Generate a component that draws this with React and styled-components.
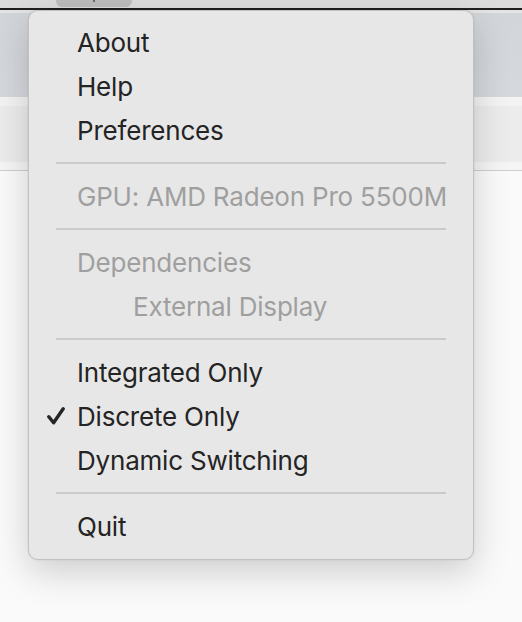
import React from "react";
import styled, { createGlobalStyle } from "styled-components";

const items = [
  { label: "About" },
  { label: "Help" },
  { label: "Preferences" },
  { separator: true },
  { label: "GPU: AMD Radeon Pro 5500M", disabled: true },
  { separator: true },
  { label: "Dependencies", disabled: true },
  { label: "External Display", disabled: true, indent: true },
  { separator: true },
  { label: "Integrated Only" },
  { label: "Discrete Only", checked: true },
  { label: "Dynamic Switching" },
  { separator: true },
  { label: "Quit" }
];

const App = () => (
  <Screen>
    <GlobalStyle />
    <MenuBar>
      <StatusPill>
        <PillGlyph />
      </StatusPill>
    </MenuBar>
    <BarEdge />
    <TitleGap />
    <Toolbar />
    <Band tone="#f3f3f4" size={9} />
    <Band tone="#ececed" size={56} />
    <Band tone="#f5f5f5" size={8} />
    <Rule />
    <Content />

    <Menu>
      {items.map((item, i) =>
        item.separator ? (
          <Separator key={i}>
            <Line />
          </Separator>
        ) : (
          <Item key={i} disabled={item.disabled} indent={item.indent}>
            {item.checked && (
              <Check viewBox="0 0 18 18">
                <path d="M1.8 9.8 L6.6 15.8 L16.2 1.8" />
              </Check>
            )}
            {item.label}
          </Item>
        )
      )}
    </Menu>
  </Screen>
);

const GlobalStyle = createGlobalStyle`
  html, body {
    margin: 0;
    padding: 0;
    background: #ffffff;
  }
`;

const Screen = styled.div`
  position: relative;
  width: 522px;
  height: 622px;
  overflow: hidden;
  display: flex;
  flex-direction: column;
  background: #fbfbfb;
  font-family: Inter, "Noto Sans", sans-serif;
`;

const MenuBar = styled.div`
  height: 8px;
  background: #dcdcdc;
  display: flex;
  padding-left: 56px;
`;

const StatusPill = styled.div`
  width: 76px;
  height: 7px;
  background: #bdbdbd;
  border-radius: 0 0 6px 6px;
  display: flex;
  justify-content: center;
`;

const PillGlyph = styled.div`
  width: 2px;
  height: 2px;
  background: #6a6a6a;
`;

const BarEdge = styled.div`
  height: 2px;
  background: #1f1f1f;
`;

const TitleGap = styled.div`
  height: 3px;
  background: #e4e4e4;
`;

const Toolbar = styled.div`
  height: 84px;
  background: linear-gradient(#d2d5d9, #d5d8dc);
`;

const Band = styled.div`
  height: ${props => props.size}px;
  background: ${props => props.tone};
`;

const Rule = styled.div`
  height: 1px;
  background: #cfcfcf;
`;

const Content = styled.div`
  flex: 1;
  background: #fafafa;
`;

const Menu = styled.div`
  position: absolute;
  left: 28px;
  top: 10px;
  width: 446px;
  box-sizing: border-box;
  padding: 9px 0 11px;
  background: #e7e7e7;
  border-radius: 10px;
  border: 1px solid #c2c2c2;
  box-shadow: 0 12px 36px rgba(0, 0, 0, 0.18), 0 0 2px rgba(0, 0, 0, 0.12);
  display: flex;
  flex-direction: column;
`;

const Item = styled.div`
  position: relative;
  height: 44px;
  display: flex;
  align-items: center;
  padding-left: ${props => (props.indent ? 104 : 48)}px;
  font-size: 26px;
  letter-spacing: -0.2px;
  color: ${props => (props.disabled ? "#9f9f9f" : "#242424")};
  white-space: nowrap;
`;

const Check = styled.svg`
  position: absolute;
  left: 18px;
  top: 13px;
  width: 18px;
  height: 18px;
  fill: none;
  stroke: #242424;
  stroke-width: 3.4;
  stroke-linecap: round;
  stroke-linejoin: round;
`;

const Separator = styled.div`
  height: 22px;
  display: flex;
  align-items: center;
  padding: 0 27px;
`;

const Line = styled.div`
  flex: 1;
  height: 2px;
  background: #cbcbcb;
`;

export default App;
